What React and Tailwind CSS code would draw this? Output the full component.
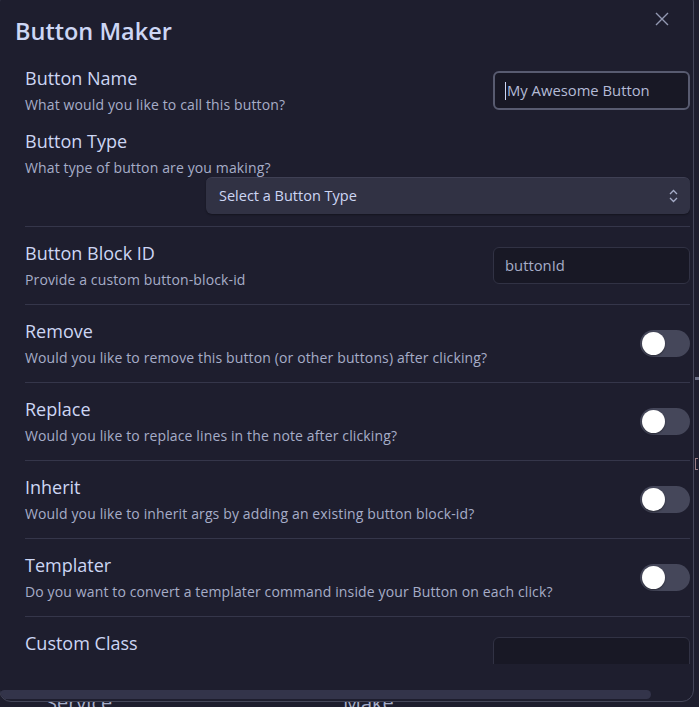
import React from "react";

const FONT = { fontFamily: '"Open Sans", "Noto Sans", sans-serif' };

function Toggle() {
  return (
    <div className="w-[50px] h-[27px] rounded-full bg-[#45475a] flex items-center pl-[2px] shrink-0">
      <div className="w-[23px] h-[23px] rounded-full bg-white shadow-[0_1px_2px_rgba(0,0,0,0.4)]" />
    </div>
  );
}

function Info({ name, desc }) {
  return (
    <div className="flex flex-col min-w-0">
      <div className="text-[18px] leading-[24px] text-[#cdd6f4]">{name}</div>
      <div className="mt-[5px] text-[14px] leading-[20px] tracking-[0.13px] text-[#a6adc8] whitespace-nowrap">{desc}</div>
    </div>
  );
}

function ToggleRow({ name, desc }) {
  return (
    <div className="flex items-center justify-between border-t border-[#35364a] pt-[14px] pb-[14px]">
      <Info name={name} desc={desc} />
      <Toggle />
    </div>
  );
}

export default function App() {
  return (
    <div className="relative w-[699px] h-[707px] bg-[#1e1e2e] overflow-hidden" style={FONT}>
      {/* page content behind modal */}
      <div className="absolute left-[46px] top-[690px] text-[20px] leading-[26px] text-[#a6adc8]">Service</div>
      <div className="absolute left-[343px] top-[690px] text-[20px] leading-[26px] text-[#a6adc8]">Make</div>
      <div className="absolute left-[695px] top-[377px] w-[4px] h-[3px] bg-[#6c7086]" />
      <div className="absolute left-[695px] top-[458px] w-[3px] h-[12px] border-l border-t border-b border-[#9a7f86]" />

      {/* modal */}
      <div className="absolute left-[-1px] top-[-10px] w-[695px] h-[712px] rounded-[12px] border border-[#45475a] bg-[#1e1e2e] overflow-hidden">
        <button className="absolute left-[655px] top-[21px] w-[14px] h-[14px] text-[#9399b2]">
          <svg width="14" height="14" viewBox="0 0 14 14" fill="none" stroke="currentColor" strokeWidth="1.4">
            <path d="M1 1 L13 13 M13 1 L1 13" />
          </svg>
        </button>

        <div className="pt-[24px] pl-[15px] text-[23.5px] leading-[32px] font-semibold text-[#cdd6f4]">
          Button Maker
        </div>

        <div className="h-[617px] overflow-hidden pl-[25px] w-[690px]">
          {/* Button Name */}
          <div className="mt-[19px] flex items-center justify-between">
            <Info name="Button Name" desc="What would you like to call this button?" />
            <div className="w-[197px] h-[39px] rounded-[6px] border-2 border-[#585b70] bg-[#181825] flex items-center pl-[10px] text-[14.8px] text-[#b4bbd6]">
              <span className="w-[1px] h-[18px] bg-[#cdd6f4] mr-[1px]" />
              My Awesome Button
            </div>
          </div>

          {/* Button Type */}
          <div className="mt-[14px] flex flex-col pb-[12px]">
            <Info name="Button Type" desc="What type of button are you making?" />
            <div className="-mt-[1px] self-end w-[484px] h-[37px] rounded-[6px] bg-[#313244] border-t border-[#3f4054] shadow-[0_1px_2px_rgba(0,0,0,0.35)] flex items-center justify-between pl-[13px] pr-[12px] text-[14.5px] text-[#cdd6f4]">
              <span>Select a Button Type</span>
              <svg width="9" height="14" viewBox="0 0 9 14" fill="none" stroke="#a6adc8" strokeWidth="1.3">
                <path d="M1 5 L4.5 1.5 L8 5 M1 9 L4.5 12.5 L8 9" />
              </svg>
            </div>
          </div>

          {/* Button Block ID */}
          <div className="flex items-center justify-between border-t border-[#35364a] pt-[14px] pb-[14px]">
            <Info name="Button Block ID" desc="Provide a custom button-block-id" />
            <div className="w-[197px] h-[37px] rounded-[6px] border border-[#313244] bg-[#181825] flex items-center pl-[11px] text-[14.8px] text-[#a6adc8]">
              buttonId
            </div>
          </div>

          <ToggleRow name="Remove" desc="Would you like to remove this button (or other buttons) after clicking?" />
          <ToggleRow name="Replace" desc="Would you like to replace lines in the note after clicking?" />
          <ToggleRow name="Inherit" desc="Would you like to inherit args by adding an existing button block-id?" />
          <ToggleRow name="Templater" desc="Do you want to convert a templater command inside your Button on each click?" />

          <div className="flex items-center justify-between border-t border-[#35364a] pt-[14px] pb-[14px]">
            <Info name="Custom Class" desc="Add a custom class for button styling" />
            <div className="w-[197px] h-[37px] rounded-[6px] border border-[#313244] bg-[#181825]" />
          </div>
        </div>

        {/* horizontal scrollbar */}
        <div className="absolute left-0 top-[699px] w-[651px] h-[9px] rounded-full bg-[#33344a]" />
      </div>
    </div>
  );
}
